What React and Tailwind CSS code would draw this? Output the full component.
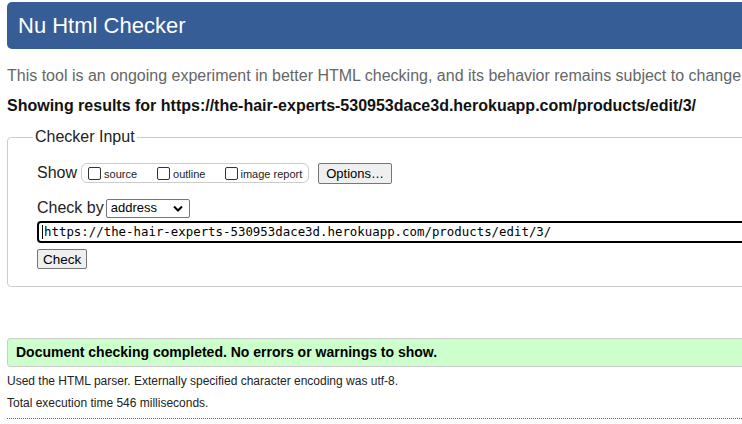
import React from 'react'

function App() {
  const url = 'https://the-hair-experts-530953dace3d.herokuapp.com/products/edit/3/'

  return (
    <div className="w-[742px] h-[424px] overflow-hidden bg-white font-['Liberation_Sans',Arial,sans-serif]">
      <div className="w-[1000px] pl-[7px] pt-[2px]">
        {/* Header */}
        <h1 className="h-[47px] rounded-[5px] bg-[#365d95] pl-[11px] text-[22px] leading-[47px] text-white font-normal">
          Nu Html Checker
        </h1>

        <p className="mt-[17px] text-[16px] leading-[20px] text-[#666]">
          This tool is an ongoing experiment in better HTML checking, and its behavior remains subject to change
        </p>
        <p className="mt-[10px] text-[16px] leading-[20px] font-bold text-[#111]">
          Showing results for {url}
        </p>

        {/* Checker input */}
        <fieldset className="mt-[9px] h-[162px] rounded-[4px] border border-[#ccc] pl-[29px] pr-4">
          <legend className="-ml-[4px] px-[2px] text-[16px] text-[#222]">Checker Input</legend>

          <div className="mt-[12px] flex items-center">
            <span className="text-[16px] text-[#222]">Show</span>
            <div className="ml-[4px] flex h-[20px] items-center rounded-[6px] border border-[#ccc] pl-[6px] pr-[6px] text-[11px] text-[#222]">
              <label className="flex items-center">
                <input type="checkbox" className="m-0 h-[13px] w-[13px] appearance-none rounded-[2px] border border-[#333] bg-white" />
                <span className="ml-[3px] mt-[2px]">source</span>
              </label>
              <label className="ml-[20px] flex items-center">
                <input type="checkbox" className="m-0 h-[13px] w-[13px] appearance-none rounded-[2px] border border-[#333] bg-white" />
                <span className="ml-[3px] mt-[2px]">outline</span>
              </label>
              <label className="ml-[20px] flex items-center">
                <input type="checkbox" className="m-0 h-[13px] w-[13px] appearance-none rounded-[2px] border border-[#333] bg-white" />
                <span className="ml-[2px] mt-[2px]">image report</span>
              </label>
            </div>
            <button className="ml-[9px] h-[21px] rounded-[2px] border border-[#767676] bg-[#efefef] px-[7px] text-[13px] text-black">
              Options…
            </button>
          </div>

          <div className="mt-[11px] flex items-center">
            <span className="text-[16px] text-[#222]">Check by</span>
            <div className="ml-[2px] flex h-[19px] w-[84px] items-center justify-between rounded-[2px] border border-[#767676] bg-white pl-[4px] pr-[6px] text-[13px] text-black">
              <span>address</span>
              <svg width="10" height="7" viewBox="0 0 10 7">
                <path d="M1 1.5 L5 5.5 L9 1.5" stroke="#000" strokeWidth="2" fill="none" />
              </svg>
            </div>
          </div>

          <div className="mt-[1px] flex h-[22px] items-center rounded-l-[4px] border-2 border-black pl-[4px] font-['DejaVu_Sans_Mono',monospace] text-[12.4px] text-black">
            <span className="-ml-[1px] mr-[1px] h-[14px] w-px bg-black" />
            {url}
          </div>

          <button className="mt-[6px] h-[20px] rounded-[2px] border border-[#767676] bg-[#efefef] px-[5px] text-[13.5px] text-black">
            Check
          </button>
        </fieldset>

        {/* Result */}
        <div className="mt-[51px] flex h-[29px] items-center rounded-l-[3px] border border-[#ccc] bg-[#ccffcc] pl-[8px] text-[14px] font-bold text-black">
          Document checking completed. No errors or warnings to show.
        </div>

        <p className="mt-[6px] text-[12px] leading-[16px] text-[#222]">
          Used the HTML parser. Externally specified character encoding was utf-8.
        </p>
        <p className="mt-[6px] text-[12px] leading-[16px] text-[#222]">
          Total execution time 546 milliseconds.
        </p>
        <div className="mt-[7px] border-t border-dotted border-[#666]" />
      </div>
    </div>
  )
}

export default App
